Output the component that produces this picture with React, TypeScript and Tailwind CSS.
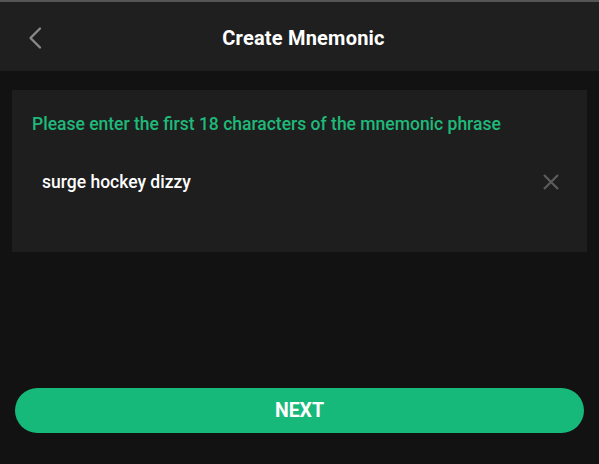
import React from "react";

const App: React.FC = () => {
  return (
    <div
      className="w-[599px] h-[464px] bg-[#121212] flex flex-col overflow-hidden"
      style={{ fontFamily: "Roboto, 'Liberation Sans', sans-serif" }}
    >
      <div className="h-[2px] bg-[#555555]" />
      <header className="relative h-[69px] bg-[#1f1f1f] flex items-center justify-center">
        <button className="absolute left-[26px] top-[21px] p-0 text-[#8a8a8a]">
          <svg width="18" height="30" viewBox="0 0 18 30" fill="none">
            <path d="M14 5.5L4.5 15L14 24.5" stroke="currentColor" strokeWidth="2.3" strokeLinecap="round" strokeLinejoin="round" />
          </svg>
        </button>
        <h1 className="mt-[2px] ml-[8px] text-[20px] font-bold text-white leading-[28px] tracking-[0.2px]">Create Mnemonic</h1>
      </header>

      <div className="mt-[19px] mx-[12px] h-[162px] bg-[#1e1e1e] flex flex-col px-[20px]">
        <p className="mt-[21px] text-[17.5px] font-medium text-[#1fb97a] leading-[26px]">
          Please enter the first 18 characters of the mnemonic phrase
        </p>
        <div className="mt-[32px] flex items-center justify-between pl-[10px] pr-[8px]">
          <span className="text-[17.5px] font-medium text-white leading-[26px]">surge hockey dizzy</span>
          <svg width="16" height="16" viewBox="0 0 16 16" fill="none">
            <path d="M1 1l14 14M15 1L1 15" stroke="#5c5c5c" strokeWidth="2.2" />
          </svg>
        </div>
      </div>

      <div className="flex-1" />
      <div className="px-[15px] pb-[31px]">
        <button className="w-full h-[45px] rounded-full bg-[#17b97b] text-white text-[19.5px] font-bold">
          NEXT
        </button>
      </div>
    </div>
  );
};

export default App;
